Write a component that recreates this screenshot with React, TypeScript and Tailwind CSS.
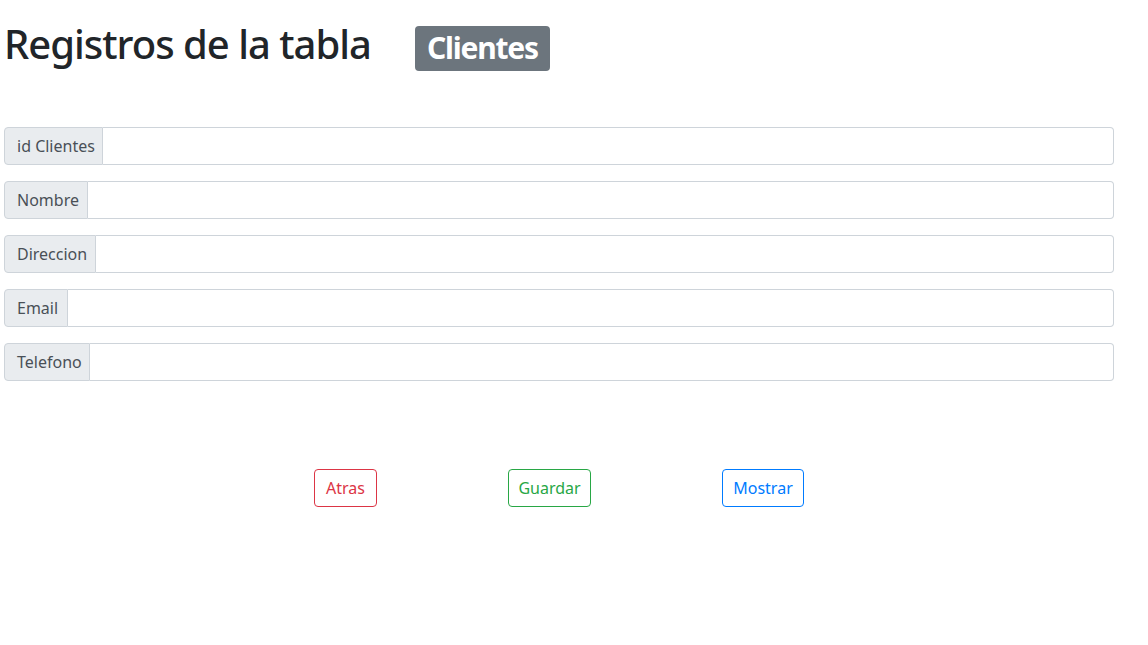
import React from 'react';

const fields = [
  { label: 'id Clientes', w: 'w-[99px]' },
  { label: 'Nombre', w: 'w-[84px]' },
  { label: 'Direccion', w: 'w-[92px]' },
  { label: 'Email', w: 'w-[64px]' },
  { label: 'Telefono', w: 'w-[86px]' },
];

const font = { fontFamily: '"Segoe UI", "Noto Sans", sans-serif' };

export default function App() {
  return (
    <div className="min-h-[645px] bg-white text-[#212529]" style={font}>
      <div className="ml-[4px] w-[1110px] pt-[20px]">
        <div className="flex items-baseline h-[52px]">
          <h1 className="text-[40px] leading-[48px] font-medium tracking-[-1px]">Registros de la tabla</h1>
          <span className="ml-[44px] inline-flex items-center h-[45px] px-[12px] rounded-[4px] bg-[#6c757d] text-white text-[30px] leading-none font-bold tracking-[-1.2px]">
            Clientes
          </span>
        </div>

        <form className="mt-[55px] flex flex-col gap-[16px]">
          {fields.map((f) => (
            <div key={f.label} className="flex h-[38px]">
              <span
                className={`${f.w} shrink-0 flex items-center px-[12px] border border-[#ced4da] rounded-l-[4px] bg-[#e9ecef] text-[16px] text-[#495057] whitespace-nowrap`}
              >
                {f.label}
              </span>
              <input
                type="text"
                className="flex-1 min-w-0 border border-l-0 border-[#ced4da] rounded-r-[4px] bg-white px-[12px] text-[16px] outline-none"
              />
            </div>
          ))}
        </form>

        <div className="mt-[88px] flex justify-center gap-[131px]">
          <button className="w-[63px] h-[38px] rounded-[4px] border border-[#dc3545] text-[#dc3545] text-[16px]">
            Atras
          </button>
          <button className="w-[83px] h-[38px] rounded-[4px] border border-[#28a745] text-[#28a745] text-[16px]">
            Guardar
          </button>
          <button className="w-[82px] h-[38px] rounded-[4px] border border-[#007bff] text-[#007bff] text-[16px]">
            Mostrar
          </button>
        </div>
      </div>
    </div>
  );
}
